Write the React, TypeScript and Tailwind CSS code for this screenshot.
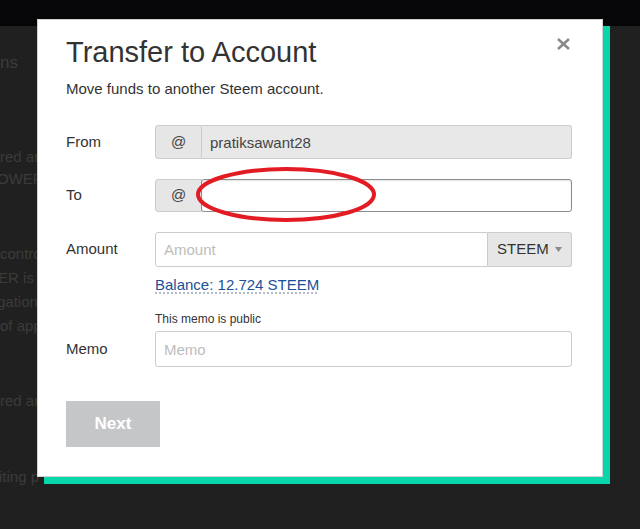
import React from 'react';

const bgLines = [
  { text: 'red an', cls: 'mt-[71px] leading-[22px]' },
  { text: 'OWER', cls: 'leading-[22px] -ml-[3px]' },
];

const CloseIcon = () => (
  <svg width="13" height="12" viewBox="0 0 13 12" fill="none">
    <path d="M1 1L12 11M12 1L1 11" stroke="#8a8a8a" strokeWidth="2.6" />
  </svg>
);

const FieldRow = ({ label, children }: { label: string; children: React.ReactNode }) => (
  <div className="flex">
    <div className="w-[89px] flex items-center text-[15px] text-[#333]">{label}</div>
    <div className="flex-1">{children}</div>
  </div>
);

const AtAddon = () => (
  <div className="w-[47px] h-full flex items-center justify-center bg-[#e6e6e6] border border-[#cccccc] rounded-l-[3px] text-[15px] text-[#444]">
    @
  </div>
);

const TransferModal = () => (
  <div className="absolute left-[37px] top-[19px] w-[566px] bg-white border border-[#d2d2d2] shadow-[7px_7px_0_#06d6a9] pl-[28px] pr-[30px] pt-[14px] pb-[29px]">
    <button className="absolute top-[18px] right-[32px]">
      <CloseIcon />
    </button>

    <h2 className="text-[29px] leading-[36px] text-[#333]">Transfer to Account</h2>
    <p className="mt-[9px] text-[15px] leading-[20px] text-[#333]">Move funds to another Steem account.</p>

    <div className="mt-[26px]">
      <FieldRow label="From">
        <div className="flex h-[34px]">
          <AtAddon />
          <input
            readOnly
            value="pratiksawant28"
            className="flex-1 min-w-0 h-full px-[8px] bg-[#e8e8e8] border border-l-0 border-[#cccccc] rounded-r-[3px] text-[15px] text-[#444] outline-none"
          />
        </div>
      </FieldRow>
    </div>

    <div className="mt-[20px]">
      <FieldRow label="To">
        <div className="flex h-[33px]">
          <AtAddon />
          <input className="flex-1 min-w-0 h-full px-[8px] bg-white border border-[#8c8c8c] rounded-[3px] -ml-[1px] shadow-[inset_0_1px_2px_rgba(0,0,0,0.12)] text-[15px] outline-none" />
        </div>
      </FieldRow>
    </div>

    <div className="mt-[20px]">
      <FieldRow label="Amount">
        <div className="flex h-[35px]">
          <input
            placeholder="Amount"
            className="flex-1 min-w-0 h-full px-[8px] bg-white border border-[#cccccc] rounded-l-[3px] text-[15px] text-[#333] placeholder:text-[#bdbdbd] outline-none"
          />
          <div className="w-[84px] h-full flex items-center justify-between pl-[9px] pr-[9px] bg-[#e6e6e6] border border-l-0 border-[#cccccc] rounded-r-[3px] text-[15px] text-[#333]">
            <span>STEEM</span>
            <svg width="7" height="5" viewBox="0 0 7 5">
              <path d="M0 0H7L3.5 5Z" fill="#8a8a8a" />
            </svg>
          </div>
        </div>
      </FieldRow>
    </div>
    <div className="pl-[89px] mt-[8px] text-[15px] leading-[20px]">
      <span className="text-[#1a5099] underline decoration-dotted decoration-[#9aa7b8] underline-offset-[3px]">
        Balance: 12.724 STEEM
      </span>
    </div>

    <div className="pl-[89px] mt-[16px] text-[12px] leading-[16px] text-[#333]">This memo is public</div>
    <div className="mt-[4px]">
      <FieldRow label="Memo">
        <input
          placeholder="Memo"
          className="w-full h-[36px] px-[8px] bg-white border border-[#cccccc] rounded-[3px] text-[15px] text-[#333] placeholder:text-[#bdbdbd] outline-none"
        />
      </FieldRow>
    </div>

    <button className="mt-[34px] w-[94px] h-[46px] bg-[#c5c6c8] text-white text-[17px] font-bold">Next</button>
  </div>
);

export default function App() {
  return (
    <div
      className="relative w-[640px] h-[529px] overflow-hidden bg-[#202020]"
      style={{ fontFamily: '"Liberation Sans", Arial, sans-serif' }}
    >
      <div className="h-[26px] bg-[#060608]" />

      <div className="text-[#3b3b3b] text-[15px] whitespace-nowrap">
        <div className="mt-[25px] text-[17px] leading-[24px]">ns</div>
        {bgLines.map((l) => (
          <div key={l.text} className={l.cls}>
            {l.text}
          </div>
        ))}
        <div className="mt-[52px] leading-[24px]">contro</div>
        <div className="leading-[24px] -ml-[2px]">ER is</div>
        <div className="leading-[24px] -ml-[3px]">gation</div>
        <div className="leading-[24px]">of app</div>
        <div className="mt-[51px] leading-[24px]">red an</div>
        <div className="mt-[52px] leading-[24px] -ml-[1px]">iting p</div>
      </div>

      <TransferModal />

      <svg className="absolute left-[194px] top-[165px]" width="184" height="59" viewBox="0 0 184 59" fill="none">
        <ellipse cx="92" cy="29.5" rx="88" ry="25.5" stroke="#e31b23" strokeWidth="4" />
      </svg>
    </div>
  );
}
